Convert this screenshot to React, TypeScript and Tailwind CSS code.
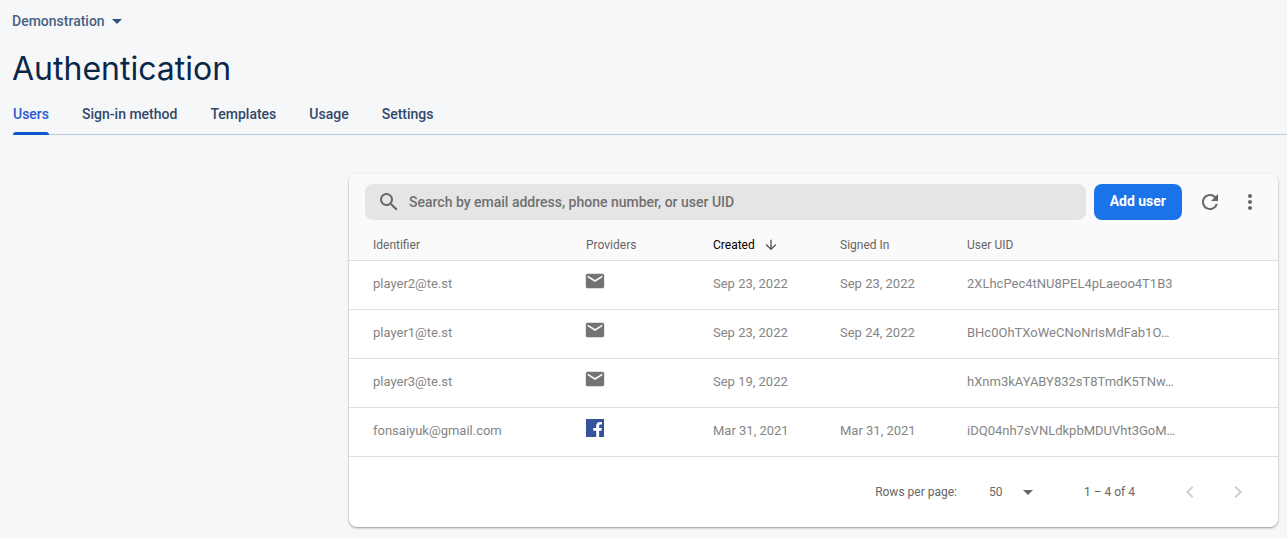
import React from "react";
import {
  MdArrowDownward,
  MdArrowDropDown,
  MdChevronLeft,
  MdChevronRight,
  MdEmail,
  MdMoreVert,
  MdRefresh,
  MdSearch,
} from "react-icons/md";

type Provider = "email" | "facebook";

interface User {
  identifier: string;
  provider: Provider;
  created: string;
  signedIn: string;
  uid: string;
}

const tabs = ["Users", "Sign-in method", "Templates", "Usage", "Settings"];

const users: User[] = [
  { identifier: "player2@te.st", provider: "email", created: "Sep 23, 2022", signedIn: "Sep 23, 2022", uid: "2XLhcPec4tNU8PEL4pLaeoo4T1B3" },
  { identifier: "player1@te.st", provider: "email", created: "Sep 23, 2022", signedIn: "Sep 24, 2022", uid: "BHc0OhTXoWeCNoNrIsMdFab1O…" },
  { identifier: "player3@te.st", provider: "email", created: "Sep 19, 2022", signedIn: "", uid: "hXnm3kAYABY832sT8TmdK5TNw…" },
  { identifier: "fonsaiyuk@gmail.com", provider: "facebook", created: "Mar 31, 2021", signedIn: "Mar 31, 2021", uid: "iDQ04nh7sVNLdkpbMDUVht3GoM…" },
];

function FacebookIcon() {
  return (
    <svg viewBox="0 0 18 18" className="size-[18px]" role="img" aria-label="Facebook">
      <rect width="18" height="18" fill="#35539a" />
      <path
        d="M10.2 18v-6.2H7.2V8.9h3V6.7c0-2.4 1.4-3.8 3.7-3.8.9 0 1.7.1 2 .1v2.6h-1.4c-1.1 0-1.4.6-1.4 1.4v1.9h2.8l-.4 2.9h-2.4V18z"
        fill="#fff"
      />
    </svg>
  );
}

function ProviderIcon({ provider }: { provider: Provider }) {
  if (provider === "facebook") return <FacebookIcon />;
  return <MdEmail className="-ml-0.5 size-[22px] text-[#737373]" role="img" aria-label="Email" />;
}

function Header() {
  return (
    <header>
      <div className="px-3 pt-[11px]">
        <button type="button" className="flex h-5 items-center text-sm font-medium text-[#476282]">
          Demonstration
          <MdArrowDropDown className="size-6 text-[#2a5580]" aria-hidden />
        </button>
        <h1 className="mt-[17px] font-['Inter',sans-serif] text-[32px] leading-[42px] text-[#0b2748]">Authentication</h1>
      </div>
      <nav aria-label="Authentication sections" className="mt-1 ml-[13px] border-b border-[#b9cbe0]">
        <ul className="-mb-px flex gap-[33px]">
          {tabs.map((tab, i) => (
            <li key={tab}>
              <a
                href="#"
                aria-current={i === 0 ? "page" : undefined}
                className={
                  i === 0
                    ? "flex h-[41px] flex-col justify-between pt-[10px] text-sm font-medium text-[#2a5bd0] after:h-[3px] after:rounded-t-[3px] after:bg-[#0b57d0]"
                    : "flex h-[41px] flex-col pt-[10px] text-sm font-medium text-[#31486a]"
                }
              >
                {tab}
              </a>
            </li>
          ))}
        </ul>
      </nav>
    </header>
  );
}

function Toolbar() {
  return (
    <div className="flex items-center bg-[#fafafa] pt-2 pr-2 pl-4">
      <label className="flex h-9 flex-1 items-center gap-2 rounded-lg bg-[#e5e5e5] pl-3 text-[#666]">
        <MdSearch className="size-6" aria-hidden />
        <input
          type="text"
          aria-label="Search users"
          placeholder="Search by email address, phone number, or user UID"
          className="h-full min-w-0 flex-1 bg-transparent text-sm font-medium outline-none placeholder:text-[#707070]"
        />
      </label>
      <button type="button" className="ml-2 h-9 rounded-lg bg-[#1a73e8] px-4 pb-0.5 text-sm font-bold text-white">
        Add user
      </button>
      <button type="button" aria-label="Refresh" className="ml-2 flex size-10 items-center justify-center text-[#666]">
        <MdRefresh className="size-6" />
      </button>
      <button type="button" aria-label="More options" className="flex size-10 items-center justify-center text-[#666]">
        <MdMoreVert className="size-6" />
      </button>
    </div>
  );
}

function UsersTable() {
  return (
    <table className="w-full table-fixed text-left">
      <colgroup>
        <col className="w-[237px]" />
        <col className="w-[127px]" />
        <col className="w-[127px]" />
        <col className="w-[127px]" />
        <col />
      </colgroup>
      <thead className="bg-[#fafafa] text-xs text-[#666]">
        <tr className="h-[38px] border-b border-[#dcdcdc]">
          <th scope="col" className="pt-2 pl-6 font-normal">Identifier</th>
          <th scope="col" className="pt-2 font-normal">Providers</th>
          <th scope="col" aria-sort="descending" className="pt-2 font-normal text-black">
            <button type="button" className="flex items-center gap-2">
              Created
              <MdArrowDownward className="size-4 text-[#555]" aria-hidden />
            </button>
          </th>
          <th scope="col" className="pt-2 font-normal">Signed In</th>
          <th scope="col" className="pt-2 font-normal">User UID</th>
        </tr>
      </thead>
      <tbody className="text-[13px] text-[#858585]">
        {users.map((user) => (
          <tr key={user.uid} className="h-[49px] border-b border-[#e0e0e0]">
            <td className="pb-px pl-6">{user.identifier}</td>
            <td className="pb-2">
              <ProviderIcon provider={user.provider} />
            </td>
            <td className="pb-px">{user.created}</td>
            <td className="pb-px">{user.signedIn}</td>
            <td className="truncate pb-px">{user.uid}</td>
          </tr>
        ))}
      </tbody>
    </table>
  );
}

function Pagination() {
  return (
    <div className="flex h-[70px] items-center justify-end pr-4 text-xs text-[#666]">
      <label htmlFor="rows-per-page">Rows per page:</label>
      <div className="ml-8 grid w-[51px] items-center">
        <select id="rows-per-page" defaultValue="50" className="col-start-1 row-start-1 w-full appearance-none bg-transparent">
          <option>50</option>
          <option>100</option>
          <option>250</option>
        </select>
        <MdArrowDropDown className="pointer-events-none col-start-1 row-start-1 size-6 justify-self-end" aria-hidden />
      </div>
      <span className="ml-11">1 – 4 of 4</span>
      <button type="button" disabled aria-label="Previous page" className="ml-[31px] flex size-12 items-center justify-center text-[#cfcfcf]">
        <MdChevronLeft className="size-6" />
      </button>
      <button type="button" disabled aria-label="Next page" className="flex size-12 items-center justify-center text-[#cfcfcf]">
        <MdChevronRight className="size-6" />
      </button>
    </div>
  );
}

export default function App() {
  return (
    <div className="min-h-screen bg-[#f6f7f9] font-['Roboto',sans-serif]">
      <Header />
      <main className="pt-[39px] pr-[9px] pb-[11px] pl-[349px]">
        <section className="overflow-hidden rounded-lg bg-white shadow-[0_1px_2px_rgba(60,64,67,0.4),0_1px_3px_rgba(60,64,67,0.15)]">
          <Toolbar />
          <UsersTable />
          <Pagination />
        </section>
      </main>
    </div>
  );
}
